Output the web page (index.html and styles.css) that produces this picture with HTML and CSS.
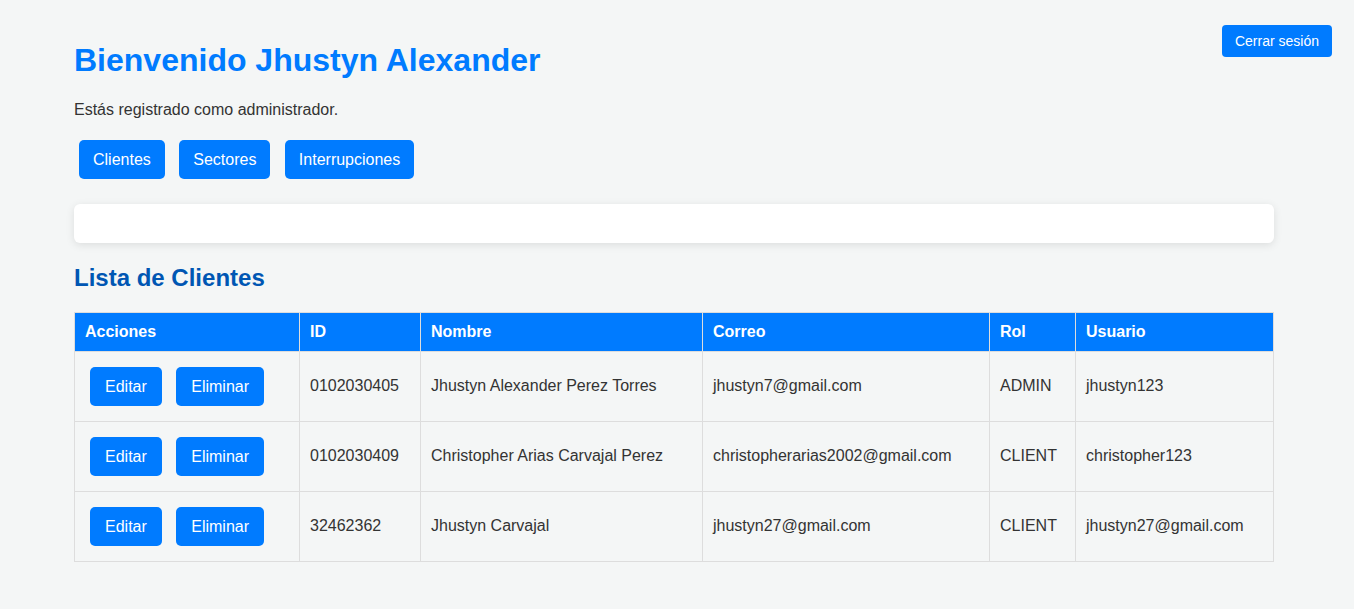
FILE: index.html
```html
<!DOCTYPE html>
<html lang="es">
<head>
<meta charset="utf-8">
<title>Panel de administración</title>
<link rel="stylesheet" href="styles.css">
</head>
<body>
<button class="logout">Cerrar sesión</button>
<div class="container">
  <h1 class="title">Bienvenido Jhustyn Alexander</h1>
  <p class="subtitle">Estás registrado como administrador.</p>
  <div class="nav">
    <button class="btn">Clientes</button>
    <button class="btn">Sectores</button>
    <button class="btn">Interrupciones</button>
  </div>
  <div class="card"></div>
  <h2 class="section-title">Lista de Clientes</h2>
  <table class="table">
    <colgroup>
      <col class="c-acc"><col class="c-id"><col class="c-nom"><col class="c-cor"><col class="c-rol"><col class="c-usu">
    </colgroup>
    <thead>
      <tr><th>Acciones</th><th>ID</th><th>Nombre</th><th>Correo</th><th>Rol</th><th>Usuario</th></tr>
    </thead>
    <tbody>
      <tr>
        <td><button class="btn row-btn">Editar</button> <button class="btn row-btn">Eliminar</button></td>
        <td>0102030405</td><td>Jhustyn Alexander Perez Torres</td><td>jhustyn7@gmail.com</td><td>ADMIN</td><td>jhustyn123</td>
      </tr>
      <tr>
        <td><button class="btn row-btn">Editar</button> <button class="btn row-btn">Eliminar</button></td>
        <td>0102030409</td><td>Christopher Arias Carvajal Perez</td><td>christopherarias2002@gmail.com</td><td>CLIENT</td><td>christopher123</td>
      </tr>
      <tr>
        <td><button class="btn row-btn">Editar</button> <button class="btn row-btn">Eliminar</button></td>
        <td>32462362</td><td>Jhustyn Carvajal</td><td>jhustyn27@gmail.com</td><td>CLIENT</td><td>jhustyn27@gmail.com</td>
      </tr>
    </tbody>
  </table>
</div>
</body>
</html>
```

FILE: styles.css
```css
body {
  margin: 0;
  padding: 21px 0;
  background: #f4f6f6;
  font-family: "Liberation Sans", Arial, sans-serif;
  font-size: 16px;
  color: #333;
}
.container {
  width: 1200px;
  margin-left: 74px;
}
.title {
  font-size: 32px;
  font-weight: bold;
  color: #007bff;
  margin: 21.44px 0;
}
.subtitle {
  margin: 16px 0;
}
.nav {
  font-size: 16px;
}
.btn {
  font-family: "Liberation Sans", Arial, sans-serif;
  font-size: 16px;
  background: #007bff;
  color: #fff;
  border: none;
  border-radius: 5px;
  padding: 10px 14px;
  margin: 5px;
  line-height: 19px;
  cursor: pointer;
}
.row-btn {
  padding: 10px 15px;
}
.logout {
  position: absolute;
  top: 25px;
  right: 22px;
  font-family: "Liberation Sans", Arial, sans-serif;
  font-size: 14px;
  background: #007bff;
  color: #fff;
  border: none;
  border-radius: 4px;
  padding: 7px 13px;
  line-height: 18px;
}
.card {
  background: #fff;
  border-radius: 6px;
  box-shadow: 0 2px 8px rgba(0, 0, 0, 0.1);
  height: 39px;
  margin: 20px 0 21px;
}
.section-title {
  font-size: 24px;
  font-weight: bold;
  color: #0056b3;
  margin: 19.92px 0;
}
.table {
  width: 1199px;
  border-collapse: collapse;
  table-layout: fixed;
}
.c-acc { width: 225px; }
.c-id { width: 121px; }
.c-nom { width: 282px; }
.c-cor { width: 287px; }
.c-rol { width: 86px; }
.c-usu { width: 198px; }
.table th,
.table td {
  border: 1px solid #ddd;
  padding: 10px;
  text-align: left;
  white-space: nowrap;
}
.table th {
  background: #007bff;
  color: #fff;
  font-weight: bold;
  line-height: 18px;
}
.table td {
  line-height: 18px;
}
```
